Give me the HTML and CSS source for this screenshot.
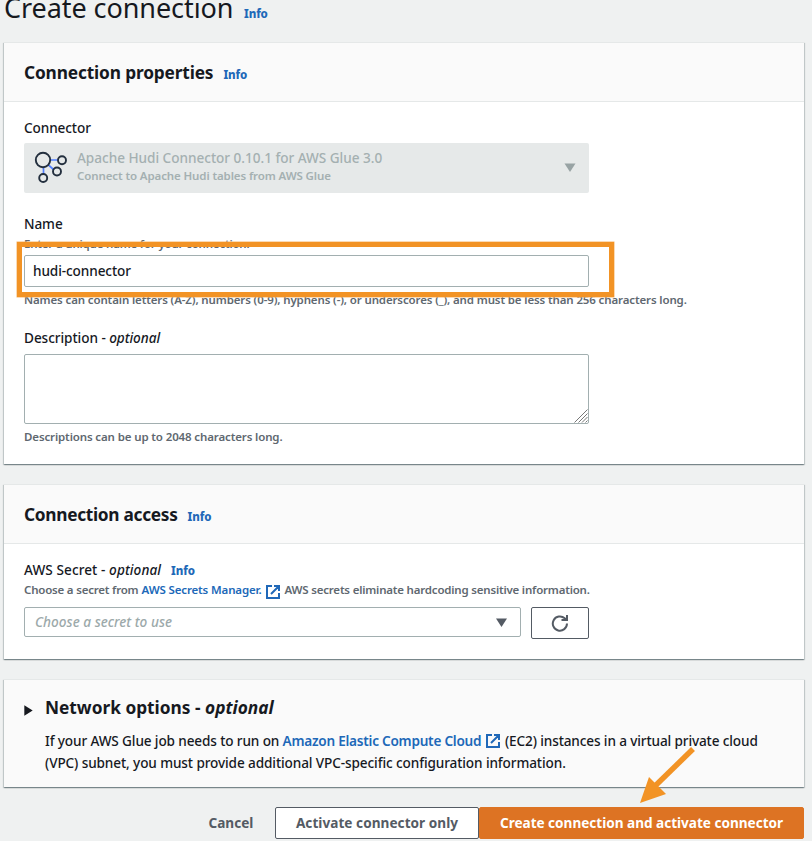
FILE: index.html
```
<!DOCTYPE html>
<html lang="en">
<head>
<meta charset="utf-8">
<title>Create connection</title>
<link rel="stylesheet" href="styles.css">
</head>
<body>
<main class="page">
  <header class="page-header">
    <h1>Create connection</h1>
    <a class="info">Info</a>
  </header>

  <section class="panel properties">
    <header class="panel-header">
      <h2>Connection properties</h2>
      <a class="info">Info</a>
    </header>
    <div class="panel-body">
      <div class="label">Connector</div>
      <div class="connector">
        <svg class="connector-icon" width="34" height="34" viewBox="0 0 34 34" fill="none">
          <path d="M16.500 10H24M9.500 17V24M14.500 15L20 20" stroke="#527fff" stroke-width="1.700"/>
          <g stroke="#232f3e" stroke-width="1.900">
            <circle cx="9" cy="10" r="7.200"/>
            <circle cx="28" cy="10.200" r="4"/>
            <circle cx="23" cy="21.500" r="4"/>
            <circle cx="9.200" cy="28" r="4"/>
          </g>
        </svg>
        <div class="connector-text">
          <div class="connector-name">Apache Hudi Connector 0.10.1 for AWS Glue 3.0</div>
          <div class="connector-desc">Connect to Apache Hudi tables from AWS Glue</div>
        </div>
        <svg class="caret" width="12" height="9" viewBox="0 0 12 9"><path d="M.5 .5h11L6 9z" fill="#98a3a4"/></svg>
      </div>

      <div class="label name-label">Name</div>
      <div class="hint name-hint">Enter a unique name for your connection.</div>
      <div class="name-field">
        <div class="input">hudi-connector</div>
        <div class="highlight"></div>
      </div>
      <div class="hint name-rule">Names can contain letters (A-Z), numbers (0-9), hyphens (-), or underscores (_), and must be less than 256 characters long.</div>

      <div class="label description-label">Description - <i>optional</i></div>
      <div class="textarea">
        <svg width="14" height="14" viewBox="0 0 14 14"><path d="M.5 13.500l13-13M4.500 13.500l9-9M8 13.500l5.500-5.500M11.500 13.500l2-2" stroke="#777" stroke-width="1"/></svg>
      </div>
      <div class="hint description-rule">Descriptions can be up to 2048 characters long.</div>
    </div>
  </section>

  <section class="panel access">
    <header class="panel-header">
      <h2>Connection access</h2>
      <a class="info">Info</a>
    </header>
    <div class="panel-body">
      <div class="label secret-label"><span>AWS Secret - <i>optional</i></span><a class="info">Info</a></div>
      <div class="hint secret-hint">
        <span>Choose a secret from</span>
        <a class="hint-link">AWS Secrets Manager.</a>
        <svg class="external" width="14" height="14" viewBox="0 0 14 14" fill="none" stroke="#2068b8" stroke-width="2"><path d="M6 1H1v12h12V8M8 1h5v5M13 1L5 9"/></svg>
        <span>AWS secrets eliminate hardcoding sensitive information.</span>
      </div>
      <div class="secret-row">
        <div class="select">
          <span>Choose a secret to use</span>
          <svg width="11" height="9" viewBox="0 0 11 9"><path d="M0 .5h11L5.500 9z" fill="#545b64"/></svg>
        </div>
        <div class="refresh">
          <svg width="18" height="18" viewBox="0 0 18 18" fill="none" stroke="#545b64" stroke-width="2"><path d="M16 9.500a7.100 7.100 0 1 1-2.300-5.200L15.500 6M16 1v5h-5.500"/></svg>
        </div>
      </div>
    </div>
  </section>

  <section class="panel network">
    <svg class="expander" width="9" height="11" viewBox="0 0 9 11"><path d="M.3 .3L8.700 5.500.3 10.700z" fill="#16191f"/></svg>
    <div>
      <h2>Network options - <i>optional</i></h2>
      <p><span class="network-lead">If your AWS Glue job needs to run on</span><a>Amazon Elastic Compute Cloud</a><svg class="external" width="14" height="14" viewBox="0 0 14 14" fill="none" stroke="#2068b8" stroke-width="2"><path d="M6 1H1v12h12V8M8 1h5v5M13 1L5 9"/></svg><span>(EC2) instances in a virtual private cloud</span></p>
      <p>(VPC) subnet, you must provide additional VPC-specific configuration information.</p>
    </div>
  </section>

  <footer class="actions">
    <div class="cancel">Cancel</div>
    <div class="button">Activate connector only</div>
    <div class="button primary">Create connection and activate connector</div>
    <svg class="arrow" width="60" height="60" viewBox="0 0 60 60"><path d="M57 5L18 43" stroke="#f29325" stroke-width="5.500"/><path d="M4 59L13 33 30 50z" fill="#f29325"/></svg>
  </footer>
</main>
</body>
</html>
```
FILE: styles.css
```
* { box-sizing: border-box; }
body {
  margin: 0;
  overflow: hidden;
  background: #eff1f1;
  color: #16191f;
  font: 460 13.6px/22px "Noto Sans", "Open Sans", sans-serif;
  letter-spacing: -.1px;
}
svg { display: block; flex: none; }
h1, h2, p { margin: 0; }
a { color: #2068b8; }
.page { height: 841px; padding: 0 8px 0 4px; white-space: nowrap; }

.page-header { display: flex; height: 42px; gap: 11px; }
h1 { width: 229px; font-size: 27px; font-weight: 430; line-height: 15px; letter-spacing: -.07px; }
.info { font-size: 11.5px; font-weight: 800; letter-spacing: -.1px; }
.page-header .info { line-height: 27px; }
h2 { font-size: 17.3px; font-weight: 700; line-height: 24px; letter-spacing: -.24px; }

.panel {
  background: #fff;
  border-top: 1px solid #e5e8e8;
  box-shadow: 0 1px 1px 0 rgba(0, 28, 36, .3), 1px 1px 1px 0 rgba(0, 28, 36, .15), -1px 1px 1px 0 rgba(0, 28, 36, .15);
}
.panel-header {
  display: flex;
  align-items: center;
  gap: 10px;
  height: 59px;
  padding-left: 20px;
  background: #fafafa;
  border-bottom: 1px solid #e5e8e8;
}
.panel-header h2 { padding-top: 2px; }
.panel-header .info { padding-top: 5px; }
.panel-body { padding: 15px 20px 0; }
.properties { height: 422px; }
.properties h2 { letter-spacing: -.15px; }
.access { height: 175px; margin-top: 20px; }
.access h2 { letter-spacing: -.3px; }

.hint { font-size: 11.5px; font-weight: 600; line-height: 16px; letter-spacing: -.13px; color: #606870; }
.connector {
  display: flex;
  width: 565px;
  height: 50px;
  margin-top: 4px;
  padding: 6px 13px 0 10px;
  border-radius: 2px;
  background: #e6e9e9;
  color: #a4b0b1;
}
.connector-icon { margin-top: 1px; }
.connector-text { flex: 1; padding-left: 9px; }
.connector-name { line-height: 18px; letter-spacing: -.03px; }
.connector-desc { font-size: 11.5px; font-weight: 600; line-height: 17px; letter-spacing: -.11px; }
.caret { margin-top: 14px; }

.name-label { margin-top: 20px; }
.name-hint { padding-top: 1px; letter-spacing: -.2px; }
.name-field { position: relative; margin-top: 3px; }
.input {
  width: 565px;
  height: 32px;
  padding-left: 8px;
  border: 1px solid #a2afb0;
  border-radius: 2px;
  line-height: 29px;
}
.highlight {
  position: absolute;
  left: -7px;
  top: -13px;
  width: 597px;
  height: 55px;
  border: 5px solid #f29325;
  box-shadow: 0 0 0 .5px #f7b568;
}
.name-rule { margin-top: 4.500px; }
.description-label { margin-top: 19.500px; letter-spacing: -.06px; }
.textarea {
  display: flex;
  justify-content: flex-end;
  align-items: flex-end;
  width: 565px;
  height: 70px;
  margin-top: 5px;
  border: 1px solid #a2afb0;
  border-radius: 2px;
}
.description-rule { margin-top: 4.500px; }

.secret-label { display: flex; gap: 10px; letter-spacing: .08px; }
.secret-label .info { padding-top: 1px; }
.secret-hint { display: flex; height: 17px; }
.secret-hint > span:first-child { width: 117.500px; letter-spacing: -.2px; }
.secret-hint > span:last-child { letter-spacing: -.2px; }
.hint-link { width: 124.500px; font-weight: 650; letter-spacing: -.14px; }
.secret-hint .external { margin: 3px 4.500px 0 0; }
.secret-row { display: flex; gap: 10px; margin-top: 9px; }
.select {
  display: flex;
  align-items: center;
  justify-content: space-between;
  width: 497px;
  height: 30px;
  padding: 0 13px 0 10px;
  border: 1px solid #a2afb0;
  border-radius: 2px;
  color: #9ca9aa;
  font-style: italic;
  letter-spacing: .02px;
}
.refresh {
  display: flex;
  align-items: center;
  justify-content: center;
  width: 58px;
  height: 32px;
  border: 1px solid #545b64;
  border-radius: 2px;
}
.access .panel-body .secret-row { margin-top: 9px; }
.access .panel-body { padding-top: 15px; }
.access .secret-hint { height: 16px; margin-top: 0; }
.access .secret-row { padding-top: 1px; }
.access .panel-body .secret-row { margin-top: 8px; }

.network {
  display: flex;
  height: 108px;
  margin-top: 20px;
  padding: 16px 20px 0;
  background: #fafafa;
}
.network > div { padding-left: 12px; }
.network h2 { margin-bottom: 10px; letter-spacing: 0; }
.expander { margin-top: 9px; }
.network p { display: flex; letter-spacing: -.11px; }
.network-lead { width: 237.500px; letter-spacing: -.13px; }
.network p a { width: 203.500px; font-weight: 560; letter-spacing: -.24px; }
.network .external { margin: 4px 5px 0 0; }
.network .external + span { letter-spacing: -.13px; }

.actions { position: relative; display: flex; justify-content: flex-end; margin-top: 20px; font-weight: 700; line-height: 31px; }
.cancel { width: 66.500px; color: #545b64; letter-spacing: 0; }
.button { width: 204px; height: 32px; text-align: center; color: #545b64; background: #fff; border: 1px solid #545b64; border-radius: 2px; line-height: 29px; letter-spacing: .04px; }
.primary { width: 325px; color: #fff; background: #dd7323; border-color: #dd7323; letter-spacing: -.02px; }
.arrow { position: absolute; left: 632px; top: -63px; }
```
